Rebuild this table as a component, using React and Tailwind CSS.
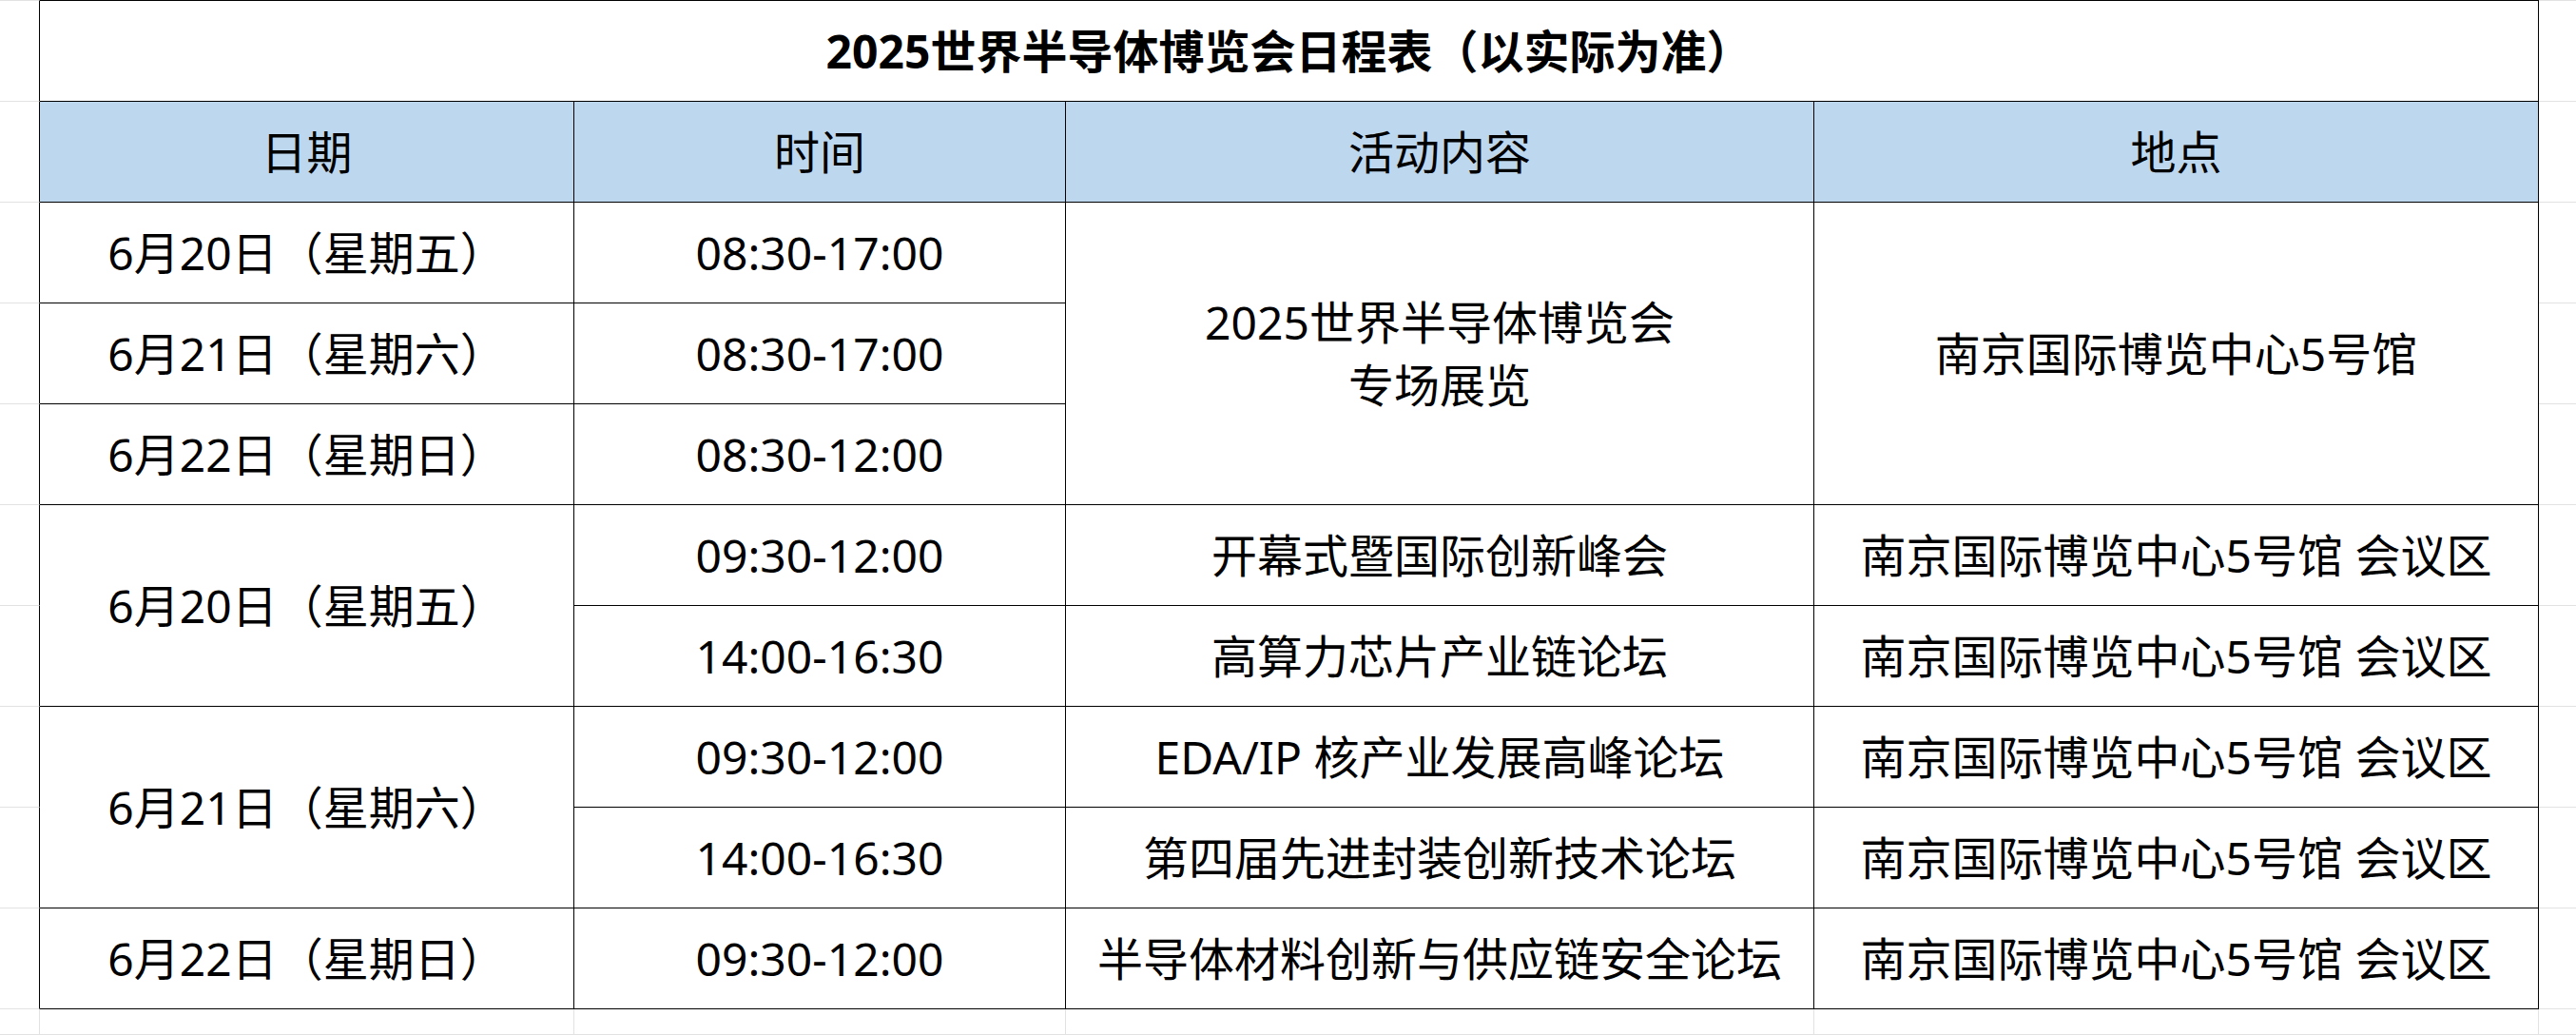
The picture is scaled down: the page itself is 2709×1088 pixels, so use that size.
import React from "react";

const G = "#e2e2e2";
const rowStarts = [
  "row-start-1",
  "row-start-2",
  "row-start-3",
  "row-start-4",
  "row-start-5",
  "row-start-6",
  "row-start-7",
  "row-start-8",
  "row-start-9",
  "row-start-10",
  "row-start-11",
];

const cell =
  "flex items-center justify-center text-center border-r border-b border-r-black border-b-black";

const LOC = "南京国际博览中心5号馆 会议区";

export default function App() {
  return (
    <div className="w-[2709px] h-[1088px] overflow-hidden bg-white text-black font-['Noto_Sans','Noto_Sans_CJK_SC',sans-serif] text-[48px] leading-[66px]">
      <div className="grid grid-cols-[42px_562px_517px_787px_762px_1fr] grid-rows-[107px_repeat(9,106px)_27px]">
        {/* left margin spreadsheet cells */}
        {rowStarts.map((r, i) => (
          <div
            key={"l" + i}
            className={
              "col-start-1 " +
              r +
              " border-b border-r border-b-[#e2e2e2] " +
              (i === 0 ? "border-t border-t-[#e2e2e2] " : "") +
              (i < 10 ? "border-r-black" : "border-r-[#e2e2e2]")
            }
          />
        ))}
        {/* right margin spreadsheet cells */}
        {rowStarts.map((r, i) => (
          <div
            key={"r" + i}
            className={
              "col-start-6 " +
              r +
              " border-b border-b-[#e2e2e2] " +
              (i === 0 ? "border-t border-t-[#e2e2e2]" : "")
            }
          />
        ))}
        {/* bottom filler row */}
        <div className="col-start-2 row-start-11 border-r border-b border-r-[#e2e2e2] border-b-[#e2e2e2]" />
        <div className="col-start-3 row-start-11 border-r border-b border-r-[#e2e2e2] border-b-[#e2e2e2]" />
        <div className="col-start-4 row-start-11 border-r border-b border-r-[#e2e2e2] border-b-[#e2e2e2]" />
        <div className="col-start-5 row-start-11 border-r border-b border-r-[#e2e2e2] border-b-[#e2e2e2]" />

        {/* title */}
        <div className={"col-start-2 col-span-4 row-start-1 border-t border-t-black font-bold " + cell}>
          2025世界半导体博览会日程表（以实际为准）
        </div>

        {/* header */}
        <div className={"col-start-2 row-start-2 bg-[#bdd7ee] " + cell}>日期</div>
        <div className={"col-start-3 row-start-2 bg-[#bdd7ee] " + cell}>时间</div>
        <div className={"col-start-4 row-start-2 bg-[#bdd7ee] " + cell}>活动内容</div>
        <div className={"col-start-5 row-start-2 bg-[#bdd7ee] " + cell}>地点</div>

        {/* exhibition block */}
        <div className={"col-start-2 row-start-3 " + cell}>6月20日（星期五）</div>
        <div className={"col-start-3 row-start-3 " + cell}>08:30-17:00</div>
        <div className={"col-start-2 row-start-4 " + cell}>6月21日（星期六）</div>
        <div className={"col-start-3 row-start-4 " + cell}>08:30-17:00</div>
        <div className={"col-start-2 row-start-5 " + cell}>6月22日（星期日）</div>
        <div className={"col-start-3 row-start-5 " + cell}>08:30-12:00</div>
        <div className={"col-start-4 row-start-3 row-span-3 flex-col " + cell}>
          <span>2025世界半导体博览会</span>
          <span>专场展览</span>
        </div>
        <div className={"col-start-5 row-start-3 row-span-3 " + cell}>南京国际博览中心5号馆</div>

        {/* June 20 forums */}
        <div className={"col-start-2 row-start-6 row-span-2 " + cell}>6月20日（星期五）</div>
        <div className={"col-start-3 row-start-6 " + cell}>09:30-12:00</div>
        <div className={"col-start-4 row-start-6 " + cell}>开幕式暨国际创新峰会</div>
        <div className={"col-start-5 row-start-6 " + cell}>{LOC}</div>
        <div className={"col-start-3 row-start-7 " + cell}>14:00-16:30</div>
        <div className={"col-start-4 row-start-7 " + cell}>高算力芯片产业链论坛</div>
        <div className={"col-start-5 row-start-7 " + cell}>{LOC}</div>

        {/* June 21 forums */}
        <div className={"col-start-2 row-start-8 row-span-2 " + cell}>6月21日（星期六）</div>
        <div className={"col-start-3 row-start-8 " + cell}>09:30-12:00</div>
        <div className={"col-start-4 row-start-8 " + cell}>EDA/IP 核产业发展高峰论坛</div>
        <div className={"col-start-5 row-start-8 " + cell}>{LOC}</div>
        <div className={"col-start-3 row-start-9 " + cell}>14:00-16:30</div>
        <div className={"col-start-4 row-start-9 " + cell}>第四届先进封装创新技术论坛</div>
        <div className={"col-start-5 row-start-9 " + cell}>{LOC}</div>

        {/* June 22 forum */}
        <div className={"col-start-2 row-start-10 " + cell}>6月22日（星期日）</div>
        <div className={"col-start-3 row-start-10 " + cell}>09:30-12:00</div>
        <div className={"col-start-4 row-start-10 " + cell}>半导体材料创新与供应链安全论坛</div>
        <div className={"col-start-5 row-start-10 " + cell}>{LOC}</div>
      </div>
    </div>
  );
}
